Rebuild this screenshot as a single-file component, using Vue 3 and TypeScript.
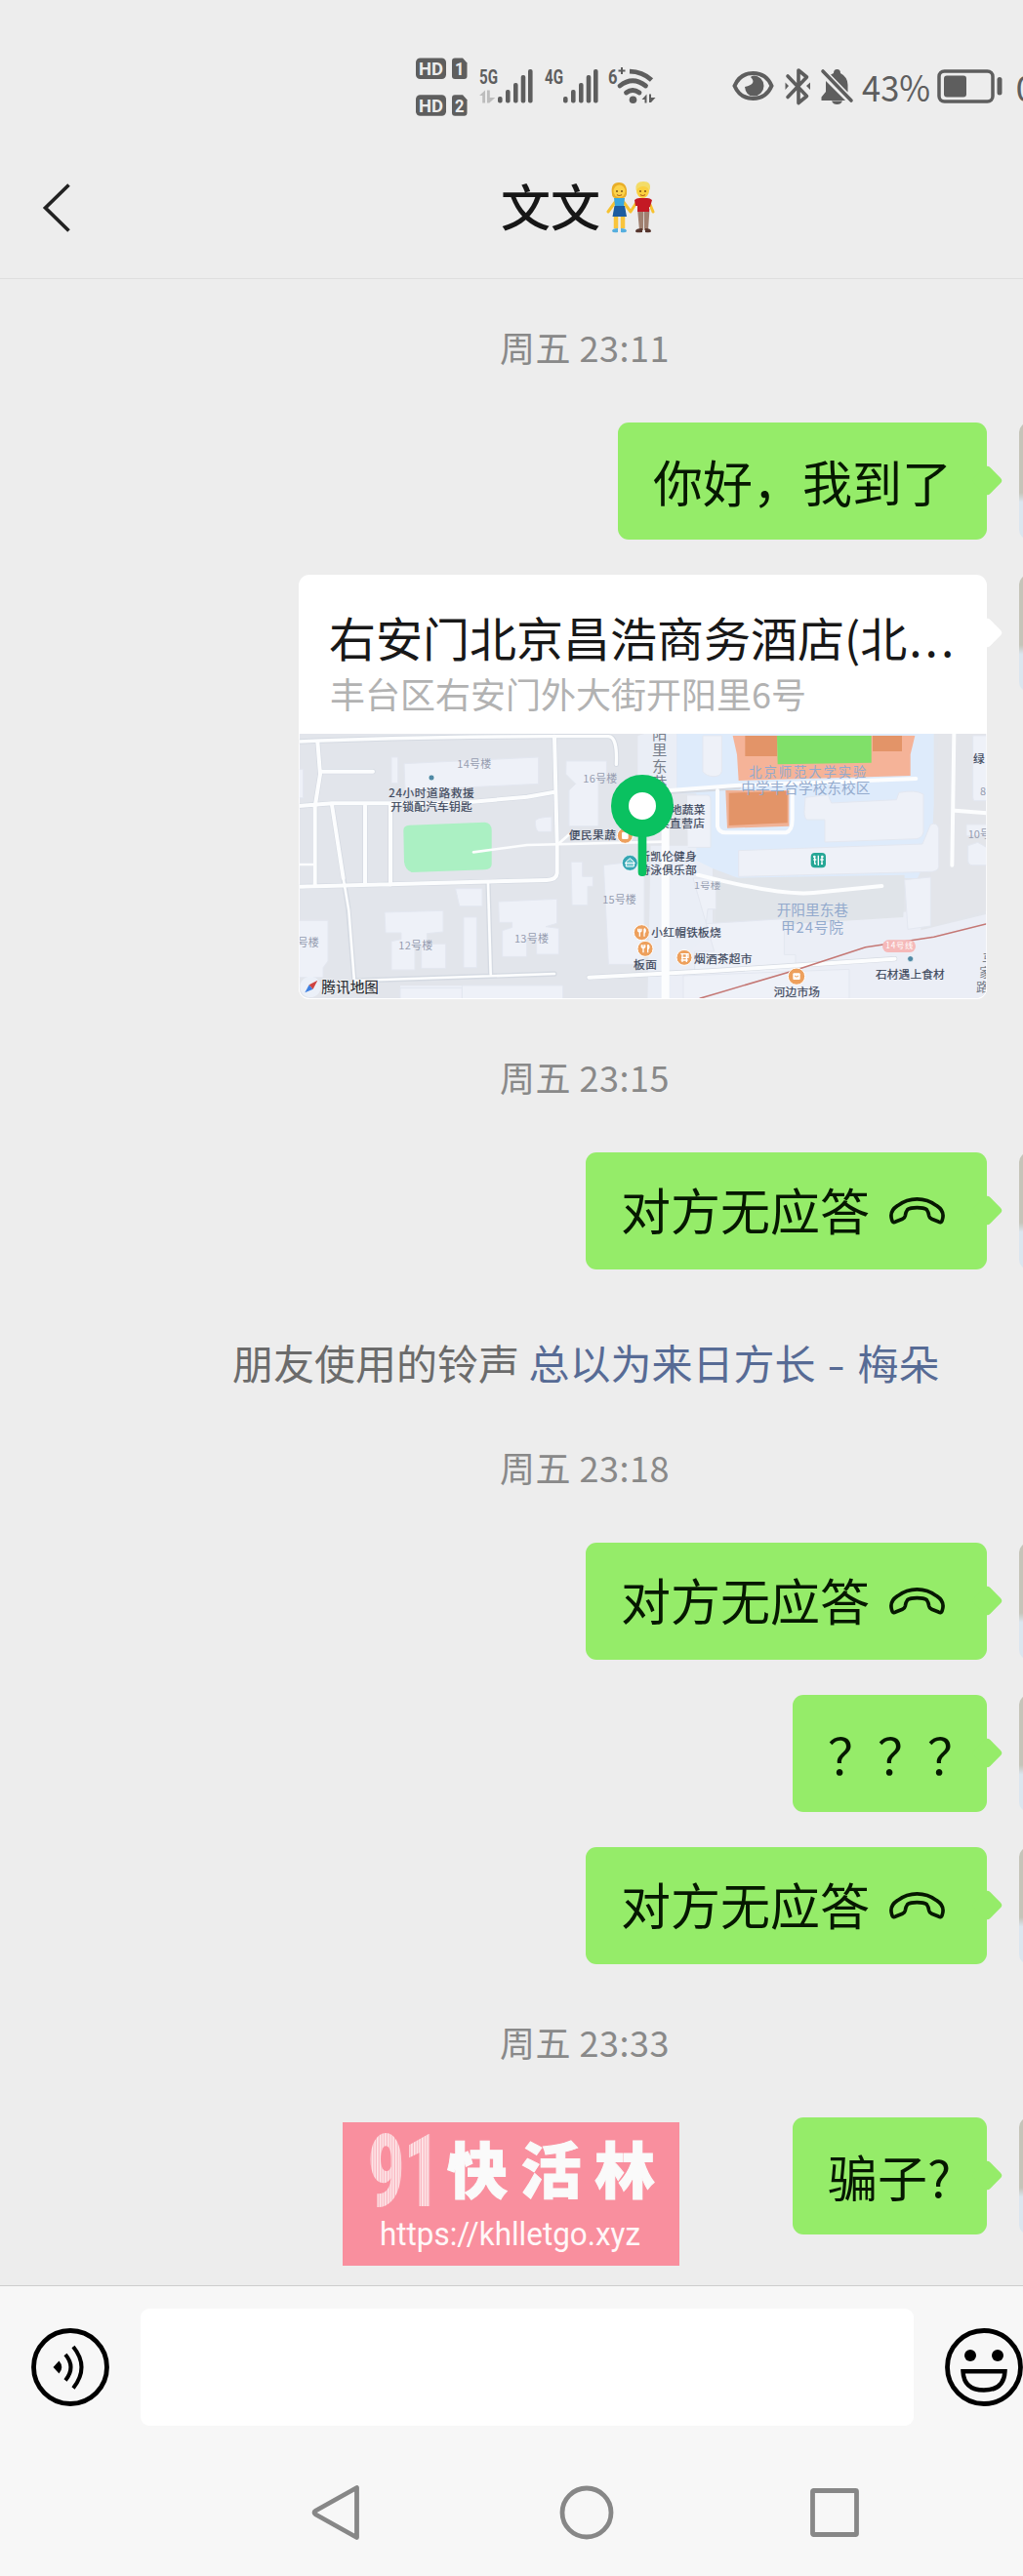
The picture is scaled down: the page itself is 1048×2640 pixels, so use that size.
<script setup lang="ts">
type Item =
  | { kind: 'time'; text: string }
  | { kind: 'text'; text: string; narrow?: boolean }
  | { kind: 'call'; text: string }
  | { kind: 'place'; title: string; address: string }
  | { kind: 'ring'; text: string; song: string; artist: string }

const items: Item[] = [
  { kind: 'time', text: '周五 23:11' },
  { kind: 'text', text: '你好，我到了' },
  { kind: 'place', title: '右安门北京昌浩商务酒店(北', address: '丰台区右安门外大街开阳里6号' },
  { kind: 'time', text: '周五 23:15' },
  { kind: 'call', text: '对方无应答' },
  { kind: 'ring', text: '朋友使用的铃声', song: '总以为来日方长', artist: '梅朵' },
  { kind: 'time', text: '周五 23:18' },
  { kind: 'call', text: '对方无应答' },
  { kind: 'text', text: '？？？', narrow: true },
  { kind: 'call', text: '对方无应答' },
  { kind: 'time', text: '周五 23:33' },
  { kind: 'text', text: '骗子?', narrow: true },
]

const bars = [
  { x: 0, y: 99 }, { x: 8, y: 92 }, { x: 16, y: 85 }, { x: 23.7, y: 77 }, { x: 31, y: 71 },
]
</script>

<template>
  <div class="phone">
    <header class="status">
      <svg class="radio" width="250" height="80" viewBox="425 50 250 80" fill="#5e5e5e">
        <g v-for="(n, i) in ['1', '2']" :key="n" :transform="`translate(0 ${i * 37.7})`">
          <rect x="426" y="59.500" width="31" height="21.500" rx="4.500" />
          <path d="M466 59.500h8l4.500 5v13.500a3 3 0 0 1-3 3h-9.500a3 3 0 0 1-3-3v-15.500a3 3 0 0 1 3-3z" />
          <text x="429" y="77" class="lat" font-size="19" font-weight="700" fill="#ececec" textLength="25" lengthAdjust="spacingAndGlyphs">HD</text>
          <text x="466" y="77" class="lat" font-size="18" font-weight="700" fill="#ececec" textLength="9.500" lengthAdjust="spacingAndGlyphs">{{ n }}</text>
        </g>
        <text x="491" y="86" class="lat" font-size="20.500" font-weight="700" textLength="19" lengthAdjust="spacingAndGlyphs">5G</text>
        <text x="558" y="86" class="lat" font-size="20.500" font-weight="700" textLength="19" lengthAdjust="spacingAndGlyphs">4G</text>
        <text x="623" y="86" class="lat" font-size="21" font-weight="700" textLength="9.500" lengthAdjust="spacingAndGlyphs">6</text>
        <path d="M633.500 72.500h7M637 69v7" stroke="#5e5e5e" stroke-width="2" />
        <path d="M491 98l6-5.500v13h-2.800v-7.500zM499 92.500h2.800v7.500h5.500l-6 5.500h-2.300z" fill="#bdbdbd" />
        <g v-for="dx in [510, 577]" :key="dx">
          <rect v-for="b in bars" :key="b.x" :x="dx + b.x" :y="b.y" width="4.600" :height="105.500 - b.y" rx="2" />
        </g>
        <g fill="none" stroke="#5e5e5e" stroke-width="4.800">
          <path d="M645 73.200Q658 73.500 667.500 82" />
          <path d="M635 88Q648 77.500 661.500 88" stroke-linecap="round" />
          <path d="M641.500 95Q648 90 655 95" stroke-linecap="round" />
        </g>
        <circle cx="648.500" cy="102.300" r="3.800" />
        <path d="M657.500 102l5-5.500v9h-2v-3.500zM665 96.500h2v3.500h4.500l-4.500 5h-2z" />
      </svg>

      <svg class="system" width="304" height="80" viewBox="744 50 304 80" fill="#5e5e5e">
        <path d="M752.500 88Q758 75 771.500 75T790.500 88Q785 101 771.500 101T752.500 88z" fill="none" stroke="#5e5e5e" stroke-width="4" />
        <path d="M769 79Q776 86 763 89Q764 98.500 772 98.500A10.500 10.500 0 0 0 772 77.500Q770 77.500 769 79z" />
        <path d="M807 78L826.500 98.500 818 105.500V72L826.500 79 807 99.500" fill="none" stroke="#5e5e5e" stroke-width="3.600" stroke-linejoin="round" stroke-linecap="round" />
        <path d="M804.500 84.500l3.500 3.500-3.500 4zM830 84.500l-4 3.500 4 4z" />
        <path d="M846 83L866 103H841.500V99.500L846 94zM851 76.500L854 75Q854 71 857.500 71T861 75Q868.500 79 868.500 87V94.500zM852 103.500h11q-1.500 3.500-5.500 3.500t-5.500-3.500z" />
        <path d="M843 73L872 103" stroke="#5e5e5e" stroke-width="3.600" stroke-linecap="round" />
        <text x="883" y="103.500" class="soft" font-size="37" textLength="70" lengthAdjust="spacingAndGlyphs">43%</text>
        <rect x="962" y="73" width="55" height="31" rx="5.500" fill="none" stroke="#5e5e5e" stroke-width="3.500" />
        <rect x="967" y="77.500" width="23" height="22" rx="3" />
        <rect x="1021.500" y="79" width="5" height="18.500" rx="2.500" />
        <text x="1040.500" y="103.500" class="soft" font-size="37">0</text>
      </svg>
    </header>

    <div class="titlebar">
      <svg class="back" width="32" height="54" viewBox="0 0 32 54"><path d="M27.500 3.500L3.500 27l24 23.500" fill="none" stroke="#222" stroke-width="3.700" /></svg>
      <h1>文文</h1>
      <svg class="couple" width="50" height="54" viewBox="0 0 50 54">
        <path d="M10 20L2 31M17 20l8 11M32 20l-7 11M43 19l5 12" stroke="#f7c22f" stroke-width="3" stroke-linecap="round" fill="none" />
        <path d="M10 33v15M17 33v15" stroke="#f9c43b" stroke-width="4.500" />
        <path d="M8 17h11l-1 8 2 10H7l2-10z" fill="#3aa7de" />
        <path d="M8.500 25h10.500l2 11H6.500z" fill="#1d5ca0" />
        <path d="M32 28h6v22h-4zM38.500 28h6l-1.500 22h-4z" fill="#a08070" />
        <path d="M29 19q2-2 5-2h8q3 0 5 2l-2 7h-1v5H32v-6h-2z" fill="#c41924" />
        <path d="M6 51q0-3 6-3v4q-5 1-6-1zM21 51q0-3-6-3v4q5 1 6-1z" fill="#55aede" />
        <path d="M30 51q0-3 7-3v4q-7 1-7-1zM46 51q0-3-6-3v4q6 1 6-1z" fill="#56362e" />
        <path d="M6 13Q4 1 13 1T21 13Q20 17 17 17H9Q6 16 6 13z" fill="#e9ae28" />
        <ellipse cx="13.500" cy="10" rx="6" ry="6.500" fill="#fcd34b" />
        <ellipse cx="37.500" cy="9.500" rx="6.500" ry="7.500" fill="#fbd03f" />
        <path d="M30.500 9Q29 0 38 0T44.500 9Q42 5 38 5T30.500 9z" fill="#f3dc68" />
        <path d="M11 9v2M16 9v2M35 9v2M40 9v2" stroke="#6b4310" stroke-width="1.300" />
        <path d="M11 13.500q2.500 2 5 0M35 13.500q2.500 2 5 0" stroke="#b5651d" stroke-width="1.200" fill="none" />
      </svg>
    </div>

    <main class="chat">
      <template v-for="(m, i) in items" :key="i">
        <p v-if="m.kind === 'time'" class="time">{{ m.text }}</p>
        <p v-else-if="m.kind === 'ring'" class="ring">{{ m.text }} <span>{{ m.song }}<i>-</i>{{ m.artist }}</span></p>
        <div v-else class="row">
          <div v-if="m.kind === 'place'" class="card">
            <div class="place-title">{{ m.title }}<span>...</span></div>
            <div class="place-address">{{ m.address }}</div>
            <svg class="map" width="705" height="272" viewBox="18 516 2115 816">
              <defs><clipPath id="mapClip"><path d="M20 516H2131V1294Q2131 1329 2095 1329H54Q20 1329 20 1294z" /></clipPath></defs>
              <rect x="18" y="516" width="2115" height="816" fill="#fff" />
              <g clip-path="url(#mapClip)">
                <rect x="18" y="516" width="2115" height="816" fill="#e2e5eb" />
                <path d="M330 1290H830V1340H330zM1080 516H1180V690H1060V522zM1100 860H1290V1340H1090z" fill="#eaeef6" />
                <path d="M1180 516H1970V850L1920 960H1370L1290 930 1240 905V700H1180z" fill="#deebfb" />
                <path d="M1290 1110L1930 1060V1120L2133 1070V1340H1160V1260z" fill="#ebeef6" />
                <path d="M1300 960L1880 950 1876 1080 1480 1105 1300 1110z" fill="#e0e4e9" />
                <path d="M1985 516H2133V1060L1960 1110V900z" fill="#e3e5ea" />
                <g fill="#eef1f8" stroke="#e3e7f0" stroke-width="3">
                  <path d="M303 588h20v80h-20zM342 608L755 588V670L345 690zM18 625h14v88H18zM840 600h124v50l-25 10v140h-90V690l20-20-30-30z" />
                  <path d="M745 785q0-12 50-14v46h-40q-10-5-10-32zM855 910h35v45h32v30h-16v58h-48zM500 992h82v54h-70zM525 1080h40v155h-40z" />
                  <path d="M282 1065l180-5v65l-50 5v32h58v75h-75v-70h-20v75h-72v-88l30-6v-20h-48zM632 1032l180-8v75l-35 10 40 5v80h-68v-48h-30v55h-75v-80l30-10v-15h-40z" />
                  <path d="M18 1090h90v125l-15 20v30H18zM330 1298h190v40H330zM520 1290h310v50H520z" />
                  <path d="M955 920L1080 905V1225H970z" />
                  <path d="M1260 522h58v110q-3 15-25 15t-33-15zM1212 705h62q10 0 10 15v145h-70M1575 712l70-8 10 25 200-10 8-22q50-10 75 5v115q-3 20-23 22l-280 10V780h-55q-8-5-8-25z" />
                  <path d="M1370 875l565-20 25-60q20-8 25 12v115q0 15-20 18l-595 15zM1880 965l80-8v150l-70 10zM1230 960h70v95h-25l-5 45 240-15v110h35v90h-310v-100h60z" />
                  <path d="M2090 522h50v200h-44q-6 0-6-12zM2070 795h70v35h-70zM2075 860l30-10 35 20v50h-50q-15 0-15-15zM1200 1260l510-20v90h-510z" />
                </g>
                <path d="M340 812Q340 798 358 797L590 788Q610 790 611 812V918Q610 932 590 934L365 942Q345 935 342 910z" fill="#abf0c3" />
                <g fill="none" stroke-linecap="round" stroke-linejoin="round">
                  <g stroke="#d5dae2" stroke-width="16">
                    <path d="M18 540Q350 525 804 524H970Q998 525 994 610" />
                    <path d="M76 540L84 640 68 740V985M84 632H246M18 738L120 730H500L720 710 800 696M804 524L812 850V945Q810 965 780 966L18 986M120 735L170 1050 190 1290M222 738V980M300 735V980M600 975L608 1255M190 1275L804 1254M910 1265L1290 1245 1850 1208M1060 700L1370 680M1143 700V1330" />
                  </g>
                  <g stroke="#fcfdfe" stroke-width="12">
                    <path d="M18 540Q350 525 804 524H970Q998 525 994 610" stroke-width="10" />
                    <path d="M76 540L84 640 68 740V985M84 632H246M18 738L120 730H500L720 710 800 696M804 524L812 850V945Q810 965 780 966L18 986M120 735L155 960M222 738V980M300 735V980" />
                    <path d="M155 960L172 1060 190 1290M600 975L608 1255M190 1275L804 1254M18 918H65M555 880L720 858 1140 848M812 858L850 825" stroke-width="8" />
                    <path d="M910 1265L1290 1245 1850 1208" />
                    <path d="M1145 790V1330" stroke-width="24" />
                    <path d="M1160 690L1360 675 1915 654" />
                    <path d="M1305 690V800Q1310 820 1330 820H1515Q1535 815 1535 780V690" />
                    <path d="M1245 950Q1500 1015 1600 1005L1810 984" />
                    <path d="M2032 516L2026 920M2035 752L2133 760" />
                  </g>
                </g>
                <path d="M1352 522H1912L1898 580V645L1370 660 1365 580z" fill="#f5b398" />
                <path d="M1390 522H1488V585H1390zM1782 522H1872V570H1782z" fill="#e39468" />
                <path d="M1488 522H1778V605L1490 610z" fill="#80e069" />
                <path d="M1330 690H1525V800L1335 806z" fill="#f0b296" />
                <path d="M1340 698L1520 692V790L1340 798z" fill="#e39468" />
                <path d="M1250 1330L1540 1244 1760 1172 1970 1141 2133 1100" stroke="#c47774" stroke-width="4.500" stroke-linejoin="round" fill="none" />
                <rect x="1812" y="1150" width="102" height="38" rx="19" fill="#f5b9b9" />

                <g class="maptext">
                  <g fill="#969db0" font-size="33">
                    <text x="505" y="622" textLength="105">14号楼</text><text x="892" y="667" textLength="105">16号楼</text>
                    <text x="325" y="1178" textLength="105">12号楼</text><text x="681" y="1158" textLength="105">13号楼</text>
                    <text x="952" y="1039" textLength="103">15号楼</text><text x="14" y="1169" textLength="66">号楼</text>
                    <text x="1233" y="994" font-size="27" textLength="82" lengthAdjust="spacingAndGlyphs">1号楼</text>
                    <text x="2112" y="706">8</text><text x="2075" y="838">10号</text>
                  </g>
                  <g fill="#777e8b" font-size="46">
                    <text x="1104" y="533">阳</text><text x="1104" y="583">里</text><text x="1104" y="632">东</text><text x="1104" y="681">巷</text>
                  </g>
                  <g fill="#3c475b" font-size="35" stroke="#3c475b" stroke-width=".6">
                    <text x="295" y="711" textLength="262">24小时道路救援</text><text x="301" y="753" textLength="250">开锁配汽车钥匙</text>
                    <text x="848" y="840" textLength="145">便民果蔬</text>
                    <text x="1160" y="763" textLength="107">地蔬菜</text><text x="1122" y="805" textLength="144">菜直营店</text>
                    <text x="1063" y="906" textLength="178">新凯伦健身</text><text x="1063" y="948" textLength="178">游泳俱乐部</text>
                    <text x="1102" y="1141" textLength="214">小红帽铁板烧</text><text x="1047" y="1238" textLength="72">板面</text>
                    <text x="1233" y="1220" textLength="178">烟酒茶超市</text><text x="1478" y="1323" textLength="142">河边市场</text>
                    <text x="1791" y="1269" textLength="212">石材遇上食材</text><text x="2091" y="607">绿</text>
                  </g>
                  <g fill="#93aacd" font-size="44">
                    <text x="1402" y="648" font-size="40" textLength="360">北京师范大学实验</text><text x="1378" y="700" textLength="396">中学丰台学校东校区</text>
                    <text x="1487" y="1075" textLength="220">开阳里东巷</text><text x="1500" y="1127" textLength="192">甲24号院</text>
                  </g>
                  <text x="1822" y="1177" fill="#fff" font-size="25" textLength="84">14号线</text>
                  <g fill="#777e8b" font-size="38"><text x="2118" y="1222">马</text><text x="2110" y="1264">家</text><text x="2100" y="1308">路</text></g>
                </g>

                <circle cx="426" cy="651" r="9" fill="#5089a5" stroke="#fff" stroke-width="2" />
                <circle cx="1898" cy="1208" r="9" fill="#5089a5" stroke="#fff" stroke-width="2" />
                <g fill="#eda05d" stroke="#fff" stroke-width="3">
                  <circle cx="1021" cy="829" r="24" /><circle cx="1072" cy="1127" r="24" /><circle cx="1083" cy="1177" r="24" />
                  <circle cx="1203" cy="1204" r="24" /><circle cx="1548" cy="1262" r="26" />
                </g>
                <rect x="1011" y="818" width="20" height="22" rx="4" fill="#fff" />
                <g stroke="#fff" stroke-width="4" fill="none">
                  <path d="M1066 1115v24M1061 1115v7q5 6 10 0v-7M1080 1115v24M1080 1115q7 5 1 13M1077 1165v24M1072 1165v7q5 6 10 0v-7M1091 1165v24M1091 1165q7 5 1 13M1192 1193h23v11h-21M1193 1212h21M1197 1193v25M1210 1193v25" />
                </g>
                <rect x="1537" y="1252" width="22" height="20" rx="3" fill="#fff" /><path d="M1542 1260q6 7 12 0" stroke="#eda05d" stroke-width="3" fill="none" />
                <circle cx="1036" cy="913" r="24" fill="#36a5b3" stroke="#fff" stroke-width="2" />
                <path d="M1036 899l12 10v15h-24v-15zM1020 914h32" stroke="#fff" stroke-width="3" fill="#6cc4cc" />
                <rect x="1592" y="882" width="46" height="46" rx="12" fill="#27a796" />
                <path d="M1604 897v19M1600 903h9M1615 890v31M1626 897v19M1621 903h10M1603 916h5M1623 916h6" stroke="#fff" stroke-width="4" />
                <circle cx="1603" cy="894" r="4" fill="#fff" /><circle cx="1627" cy="894" r="4" fill="#fff" />

                <rect x="1061" y="800" width="26" height="154" rx="12" fill="#0ac160" />
                <circle cx="1074" cy="738" r="69" fill="#fff" stroke="#0ac160" stroke-width="54" />

                <circle cx="54" cy="1294" r="32" fill="#eef3fb" opacity=".8" />
                <path d="M37 1312L50 1288 62 1301z" fill="#3d7fe0" /><path d="M76 1274L50 1288 62 1301z" fill="#cf423f" />
                <text class="maptext" x="88" y="1312" font-size="44" font-weight="500" fill="#33373d" stroke="#fff" stroke-width="3" paint-order="stroke" textLength="176">腾讯地图</text>
              </g>
            </svg>
          </div>
          <div v-else class="bubble" :class="{ call: m.kind === 'call' }">
            <span :class="{ narrow: m.kind === 'text' && m.narrow }">{{ m.text }}</span>
            <svg v-if="m.kind === 'call'" class="handset" width="57" height="28" viewBox="0 0 61 29" preserveAspectRatio="none">
              <path d="M3 24.500Q-.5 15 9 9Q19 2 30.500 2T52 9Q61.500 15 58 24.500Q57 27.500 54 26L46.500 23Q44 22 43.500 19.500Q43 15.500 41 13Q38 11 30.500 11T20 13Q18 15.500 17.500 19.500Q17 22 14.500 23L7 26Q4 27.500 3 24.500z" fill="none" stroke="#061800" stroke-width="3.900" stroke-linejoin="round" />
            </svg>
          </div>
          <div class="avatar"></div>
        </div>
      </template>

      <aside class="stamp">
        <svg width="345" height="147" viewBox="351 2175 345 147">
          <defs>
            <pattern id="stripes" width="2.700" height="2.700" patternUnits="userSpaceOnUse">
              <rect width="2.700" height="2.700" fill="#fab3be" /><rect width="1.500" height="2.700" fill="#fdeaec" />
            </pattern>
          </defs>
          <text x="377" y="2261" class="nine" font-size="104" fill="url(#stripes)" textLength="74" lengthAdjust="spacingAndGlyphs">91</text>
          <text x="458" y="2248" class="brush" font-size="62" fill="#fafafa" stroke="#fafafa" stroke-width="1" textLength="213">快活林</text>
          <text x="389" y="2301" class="url" font-size="33" fill="#fff7f8" textLength="267" lengthAdjust="spacingAndGlyphs">https://khlletgo.xyz</text>
        </svg>
      </aside>
    </main>

    <footer class="composer">
      <div class="inputs">
        <svg width="80" height="80" viewBox="0 0 80 80" fill="none" stroke="#000" stroke-width="4.800">
          <circle cx="40" cy="40" r="37.500" />
          <path d="M22.500 40l6-6.500Q34 40 28.500 46.500z" fill="#000" stroke="none" />
          <path d="M35 27Q46 40 35 53.500M43 19Q60 40 43 61.500" stroke-width="4" />
        </svg>
        <div class="field"></div>
        <svg width="80" height="80" viewBox="0 0 80 80" fill="none" stroke="#000" stroke-width="4.800">
          <circle cx="40" cy="40" r="37.500" />
          <circle cx="26" cy="28" r="6" fill="#000" stroke="none" /><circle cx="54" cy="28" r="6" fill="#000" stroke="none" />
          <path d="M18.500 44.300h43Q60.500 63.500 40 63.500T18.500 44.300z" stroke-width="4.400" />
        </svg>
      </div>
      <nav class="keys">
        <svg width="60" height="60" viewBox="0 0 60 60"><path d="M48.500 4.500V55.500L6.500 32Q3.500 30 6.500 28z" /></svg>
        <svg width="60" height="60" viewBox="0 0 60 60"><circle cx="30" cy="30" r="25" /></svg>
        <svg width="60" height="60" viewBox="0 0 60 60"><rect x="7.500" y="7.500" width="45" height="45" rx="1" /></svg>
      </nav>
    </footer>
  </div>
</template>

<style>
body { background: #ededed; }
</style>

<style scoped>
.phone {
  width: 1048px;
  height: 2640px;
  overflow: hidden;
  display: flex;
  flex-direction: column;
  background: #ededed;
  font-family: "Noto Sans CJK SC", "Noto Sans", sans-serif;
}
svg { display: block; flex: none; }
.lat { font-family: "Roboto", sans-serif; }
.soft { font-family: "Noto Sans CJK SC", sans-serif; }
.status { display: flex; height: 130px; align-items: flex-end; padding-left: 425px; box-sizing: border-box; gap: 69px; flex: none; }
.titlebar {
  display: flex;
  align-items: center;
  height: 156px;
  box-sizing: border-box;
  padding: 10px 0 0 43px;
  border-bottom: 1.500px solid #dedede;
  flex: none;
}
.titlebar h1 { margin: -5px 0 0 438px; font-size: 51px; line-height: 60px; font-weight: 500; color: #171717; }
.couple { margin-left: 6px; }
.chat { position: relative; flex: none; height: 2056px; padding-top: 45px; box-sizing: border-box; }
p { margin: 0; }
.time { width: 1198px; line-height: 48px; font-size: 36px; letter-spacing: .5px; text-align: center; color: #898989; white-space: pre; }
.row + .time { margin-top: 55px; }
.ring + .time { margin-top: 53px; }
.ring {
  margin: 65px 0 0 238px;
  line-height: 60px;
  font-size: 42px;
  color: #6b6b6b;
  white-space: nowrap;
}
.ring span { color: #576b95; }
.ring i { display: inline-block; width: 43px; text-align: center; font-style: normal; transform: scaleX(1.25); }
.row { display: flex; width: 1164px; justify-content: flex-end; align-items: flex-start; gap: 33px; margin-top: 36px; }
.time + .row { margin-top: 54px; }
.bubble, .card { position: relative; border-radius: 11px; flex: none; }
.bubble {
  display: flex;
  align-items: center;
  height: 120px;
  width: max-content;
  padding: 0 36px;
  box-sizing: border-box;
  background: #95ec69;
  color: #061800;
  font-size: 51px;
  line-height: 70px;
  white-space: nowrap;
}
.bubble.call { padding-bottom: 4px; }
.bubble::after, .card::after {
  content: "";
  position: absolute;
  right: -12px;
  top: 48px;
  width: 23px;
  height: 23px;
  border-radius: 4px;
  background: #95ec69;
  transform: rotate(45deg);
}
.card::after { background: #fff; }
.narrow { width: 127px; }
.handset { margin: 4px 7px 0 20px; }
.card { width: 705px; height: 435px; background: #fff; }
.place-title { padding: 30px 0 0 31px; font-size: 48px; line-height: 66px; height: 66px; color: #181818; white-space: nowrap; }
.place-title span { letter-spacing: 3px; margin-left: 2px; }
.place-address { padding-left: 32px; height: 67px; line-height: 50px; font-size: 36px; color: #b2b2b2; white-space: nowrap; }
.map { border-radius: 0 0 11px 11px; }
.maptext { font-family: "Noto Sans CJK SC", sans-serif; }
.avatar { width: 120px; height: 120px; border-radius: 10px; background: linear-gradient(#c5c4b9 0 60%, #dbe6ef 68% 100%); flex: none; }
.stamp { position: absolute; left: 351px; top: 1889px; width: 345px; height: 147px; background: #f98f9e; }
.nine { font-family: "Roboto", sans-serif; font-weight: 900; }
.brush { font-family: "Noto Sans CJK SC", sans-serif; font-weight: 900; }
.url { font-family: "Roboto", sans-serif; }
.composer { flex: 1; background: #f7f7f7; border-top: 1.500px solid #cdcdcd; box-sizing: border-box; }
.inputs { display: flex; align-items: center; width: 1080px; padding: 23px 0 0 32px; box-sizing: border-box; gap: 32px; }
.field { width: 792px; height: 120px; border-radius: 9px; background: #fff; flex: none; }
.keys { display: flex; gap: 194px; padding: 59px 0 0 317px; }
.keys svg { fill: none; stroke: #878787; stroke-width: 4.800px; stroke-linejoin: round; }
</style>
